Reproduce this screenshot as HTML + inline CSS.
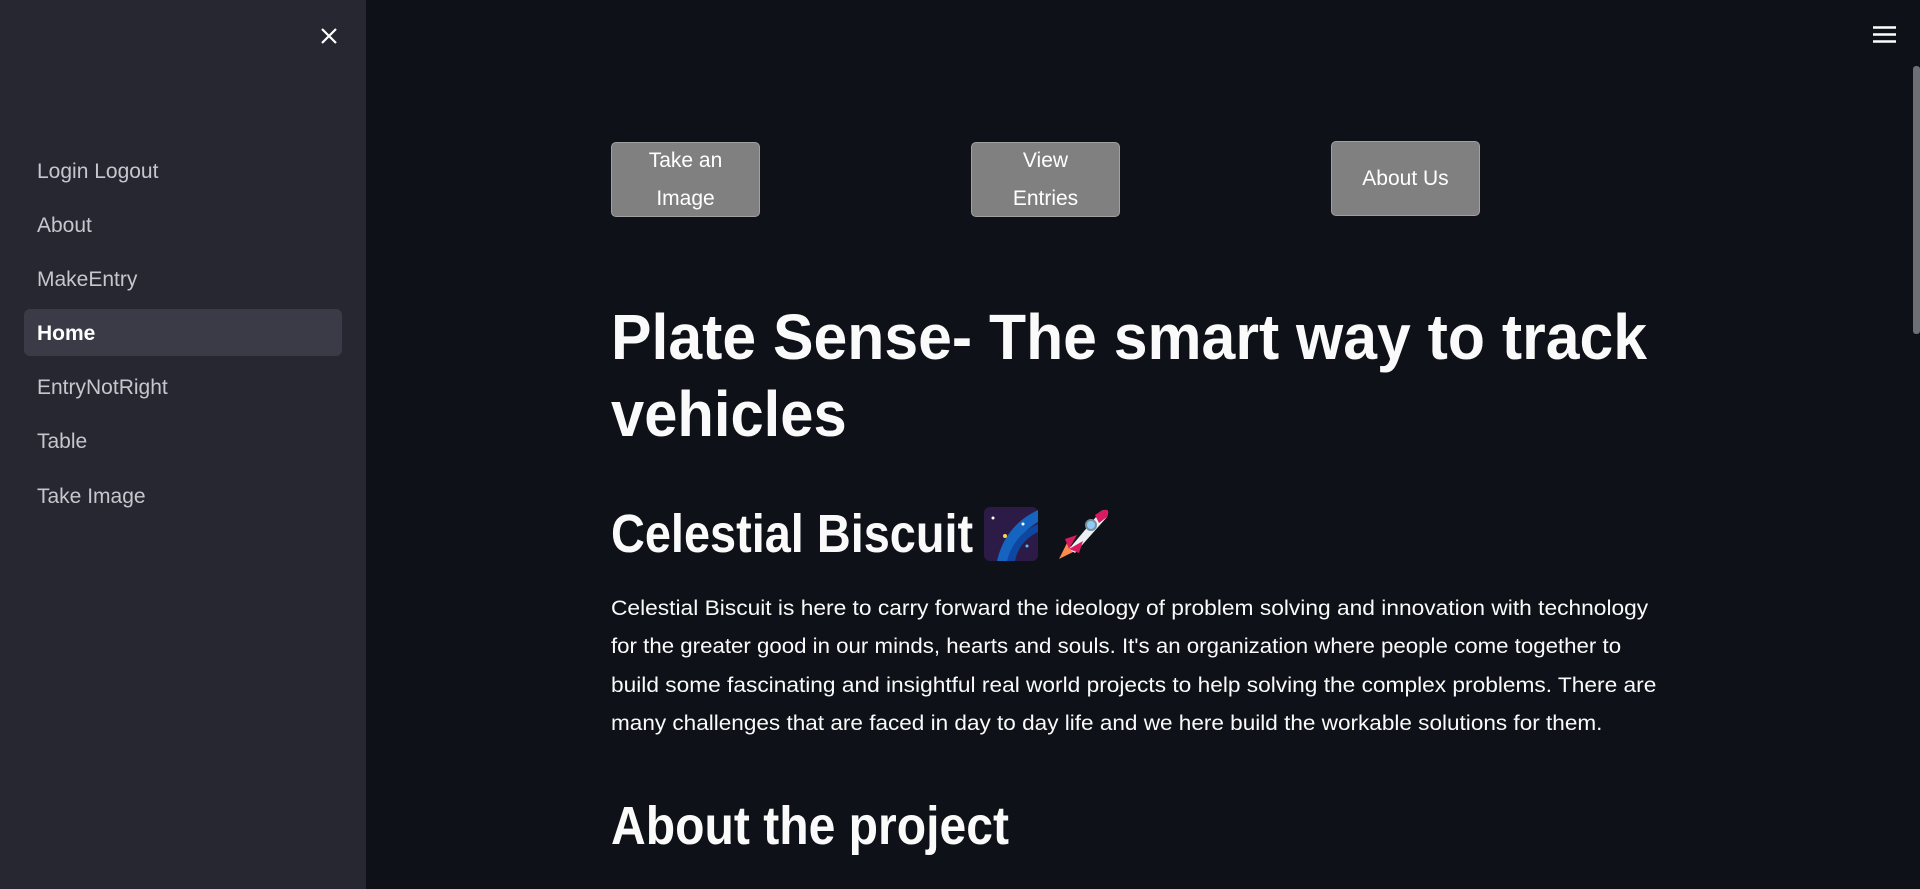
<!DOCTYPE html>
<html><head><meta charset="utf-8"><style>
html,body{margin:0;padding:0;width:1920px;height:889px;overflow:hidden;background:#0e1117;font-family:"Source Sans Pro","Liberation Sans",sans-serif;color:#fafafa}
#side{position:absolute;left:0;top:0;width:366px;height:889px;background:#262730}
.nav{position:absolute;left:37px;font-size:21px;color:#c6c7cc;line-height:28px;white-space:nowrap}
.hl{position:absolute;left:24px;top:309px;width:318px;height:47px;background:#3a3b47;border-radius:6px}
.btn{position:absolute;width:147px;height:73px;background:#808080;border:1px solid #a0a0a0;border-radius:5px;color:#fff;font-size:21px;line-height:38px;text-align:center;display:flex;align-items:center;justify-content:center}
.fit{position:absolute;left:611px;white-space:nowrap;transform-origin:0 50%;display:inline-block}
.h1{font-weight:bold;font-size:64px;line-height:70px}
.p{font-size:21px;line-height:30px}
</style></head><body>
<div id="side">
<svg style="position:absolute;left:320px;top:27px" width="18" height="18" viewBox="0 0 18 18"><path d="M2 2L16 16M16 2L2 16" stroke="#fff" stroke-width="2.2"/></svg>
<div class="hl"></div>
<div class="nav" style="top:158px">Login Logout</div>
<div class="nav" style="top:212px">About</div>
<div class="nav" style="top:266px">MakeEntry</div>
<div class="nav" style="top:320px;color:#fff;font-weight:bold">Home</div>
<div class="nav" style="top:374px">EntryNotRight</div>
<div class="nav" style="top:428px">Table</div>
<div class="nav" style="top:483px">Take Image</div>
</div>
<svg style="position:absolute;left:1873px;top:25px" width="23" height="19" viewBox="0 0 23 19"><path d="M0 2.5H23M0 9.5H23M0 16.5H23" stroke="#fff" stroke-width="2.4"/></svg>
<div style="position:absolute;left:1913px;top:66px;width:7px;height:268px;background:#6e6f74;border-radius:3px"></div>
<div class="btn" style="left:611px;top:142px">Take an<br>Image</div>
<div class="btn" style="left:971px;top:142px">View<br>Entries</div>
<div class="btn" style="left:1331px;top:141px">About Us</div>
<div class="fit h1" style="top:302px" w="1036">Plate Sense- The smart way to track</div>
<div class="fit h1" style="top:379px" w="236">vehicles</div>
<div class="fit" style="top:503px;font-size:54px;line-height:62px;font-weight:600" w="362">Celestial Biscuit</div>
<svg style="position:absolute;left:983px;top:506px" width="56" height="56" viewBox="0 0 56 56"><rect x="1" y="1" width="54" height="54" rx="6" fill="#2d1b47"/><path d="M14 55 C20 30 34 14 55 4 V16 C38 26 30 40 28 55Z" fill="#1565c0"/><path d="M24 55 C28 38 40 24 55 18 V26 C42 32 34 44 32 55Z" fill="#0d47a1"/><circle cx="10" cy="12" r="1.5" fill="#fff"/><circle cx="22" cy="30" r="2" fill="#ffd54f"/><circle cx="40" cy="18" r="1.5" fill="#fff"/><circle cx="44" cy="40" r="1.5" fill="#4fc3f7"/></svg>
<svg style="position:absolute;left:1055px;top:505px" width="58" height="58" viewBox="0 0 58 58"><path d="M4 54 L12 38 L20 46Z" fill="#ff8a50"/><path d="M14 44 L46 6 Q56 2 52 12 L20 48Z" fill="#eceff1"/><path d="M46 6 Q56 2 52 12 L44 18 L40 10Z" fill="#d81b60"/><circle cx="36" cy="20" r="5" fill="#90caf9" stroke="#78909c" stroke-width="2"/><path d="M10 34 L22 30 L14 44Z M24 48 L28 36 L14 44Z" fill="#d81b60"/></svg>
<div class="fit p" style="top:594px" w="1037">Celestial Biscuit is here to carry forward the ideology of problem solving and innovation with technology</div>
<div class="fit p" style="top:632px" w="1010">for the greater good in our minds, hearts and souls. It's an organization where people come together to</div>
<div class="fit p" style="top:671px" w="1045">build some fascinating and insightful real world projects to help solving the complex problems. There are</div>
<div class="fit p" style="top:709px" w="991">many challenges that are faced in day to day life and we here build the workable solutions for them.</div>
<div class="fit" style="top:793px;font-size:54px;line-height:66px;font-weight:600" w="398">About the project</div>
<script>
document.querySelectorAll('.fit').forEach(function(e){var w=+e.getAttribute('w');var r=e.offsetWidth;if(r>0)e.style.transform='scaleX('+(w/r)+')';});
</script>
</body></html>
